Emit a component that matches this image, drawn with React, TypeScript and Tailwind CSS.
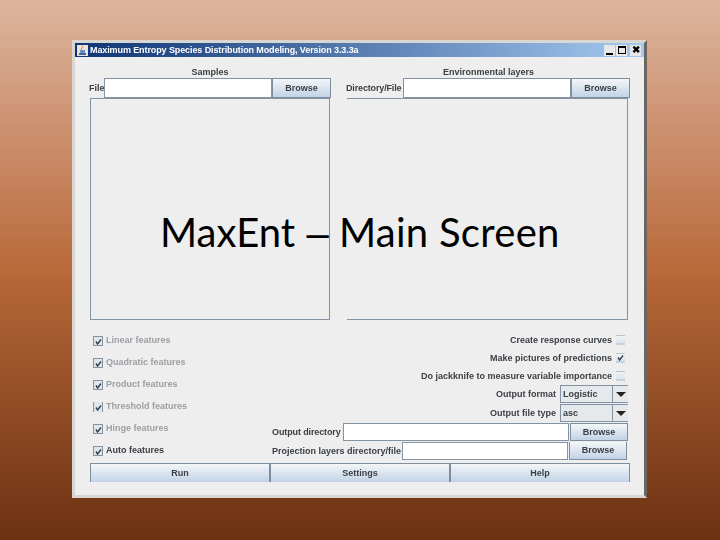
import type { ReactNode } from "react";

const features = ["Linear features", "Quadratic features", "Product features", "Threshold features", "Hinge features", "Auto features"];

function CheckMark() {
  return (
    <svg width="7" height="7" viewBox="0 0 7 7" fill="none" stroke="#33404f" strokeWidth="1.4">
      <path d="M1 3.5 L2.6 6 L6 1.5" />
    </svg>
  );
}

function Btn({ className = "", children }: { className?: string; children: ReactNode }) {
  return (
    <div className={"flex items-center justify-center pt-[1px] border border-[#7f8e9d] bg-gradient-to-b from-[#f4f6f9] to-[#c2d3e5] text-[#3a3f45] text-[9px] font-bold " + className}>
      {children}
    </div>
  );
}

function Field({ className = "" }: { className?: string }) {
  return <div className={"bg-white border border-[#8393a3] " + className} />;
}

function Combo({ value }: { value: string }) {
  return (
    <div className="flex w-[68px] h-[18px] border border-[#8393a3] border-r-0 bg-[#e6e9ec]">
      <div className="flex-1 pl-[2px] pt-[1px] flex items-center text-[9px] font-bold text-[#3a3f45] border-r border-[#8393a3]">{value}</div>
      <div className="w-[15px] flex items-center justify-center">
        <div className="w-0 h-0 border-x-[5px] border-x-transparent border-t-[5px] border-t-[#222]" />
      </div>
    </div>
  );
}

function RightCheck({ label, checked }: { label: string; checked?: boolean }) {
  return (
    <div className="h-[18px] flex items-center justify-end gap-[4px] pr-[5px]">
      <span className="pt-[1px]">{label}</span>
      <div className="w-[9px] h-[10px] border-t border-[#b9c3cd] border-b-2 border-b-[#c3d2e0] bg-gradient-to-b from-[#f0f2f5] to-[#dbe4ec] flex items-center justify-center">
        {checked && <CheckMark />}
      </div>
    </div>
  );
}

export default function App() {
  return (
    <div className="relative w-[720px] h-[540px] overflow-hidden pt-[40px] pl-[72px] bg-gradient-to-b from-[#dcb59e] via-[#b9693a] to-[#6c3213] font-['Liberation_Sans',sans-serif]">
      <div className="w-[575px] h-[458px] bg-[#eeeeee] border-[3px] border-[#d9d7d2] border-r-[#6a6763] flex flex-col text-[9px] font-bold text-[#3a3f45] blur-[0.4px]">
        <div className="h-[14px] shrink-0 flex items-center bg-gradient-to-r from-[#0e3474] to-[#a6caf0] pl-[2px] pr-[3px]">
          <svg width="11" height="11" viewBox="0 0 11 11">
            <rect width="11" height="11" fill="#e9e4da" />
            <path d="M2 8h7v2H2z" fill="#3f68a8" />
            <path d="M3 5h5v3H3z" fill="#6d8fbe" />
            <path d="M5 1c2 2-2 2 0 4" stroke="#d8702a" fill="none" />
          </svg>
          <span className="ml-[2px] pt-[1px] text-white text-[9px] font-bold tracking-[-0.1px]">Maximum Entropy Species Distribution Modeling, Version 3.3.3a</span>
          <div className="ml-auto flex items-center">
            <div className="w-[11px] h-[11px] bg-[#e8e8e8] flex items-end justify-center pb-[1px]"><div className="w-[7px] h-[2px] bg-black" /></div>
            <div className="ml-[1px] w-[11px] h-[11px] bg-[#e8e8e8] flex items-center justify-center"><div className="w-[8px] h-[8px] border border-black border-t-2" /></div>
            <div className="ml-[3px] w-[11px] h-[11px] bg-[#e8e8e8] flex items-center justify-center text-[10px] font-bold leading-none text-black">✖</div>
          </div>
        </div>

        <div className="flex-1 flex flex-col pl-[15px] pr-[14px]">
          <div className="flex gap-[15px]">
            <div className="w-[242px]">
              <div className="h-[21px] pt-[10px] pr-[2px] text-center leading-[11px]">Samples</div>
              <div className="flex h-[20px] items-center">
                <span className="w-[14px] -ml-[1px] mr-[1px] pt-[1px]">File</span>
                <Field className="w-[168px] h-full" />
                <Btn className="w-[59px] h-full">Browse</Btn>
              </div>
              <div className="h-[222px] mr-[2px] border border-[#8393a3]" />
            </div>
            <div className="flex-1">
              <div className="h-[21px] pt-[10px] text-center leading-[11px]">Environmental layers</div>
              <div className="flex h-[20px] items-center">
                <span className="w-[56px] -ml-[1px] mr-[1px] pt-[1px] tracking-[-0.15px]">Directory/File</span>
                <Field className="w-[168px] h-full" />
                <Btn className="w-[59px] h-full">Browse</Btn>
              </div>
              <div className="h-[222px] mr-[2px] border border-[#8393a3] border-l-0" />
            </div>
          </div>

          <div className="mt-[10px] flex">
            <div className="w-[182px]">
              {features.map((f, i) => (
                <div key={f} className="h-[22px] flex items-center gap-[3px] pl-[3px]">
                  <div className={"w-[10px] h-[10px] border border-[#8393a3] bg-[#dfe5eb] flex items-center justify-center " + (i === 3 ? "border-y-0" : "")}><CheckMark /></div>
                  <span className={i === 5 ? "" : "text-[#9b9fa3]"}>{f}</span>
                </div>
              ))}
            </div>
            <div className="flex-1 pt-[1px] flex flex-col">
              <RightCheck label="Create response curves" />
              <RightCheck label="Make pictures of predictions" checked />
              <RightCheck label="Do jackknife to measure variable importance" />
              <div className="h-[19px] flex items-start justify-end gap-[4px] pr-[2px]">
                <span className="leading-[18px]">Output format</span>
                <Combo value="Logistic" />
              </div>
              <div className="h-[19px] flex items-start justify-end gap-[4px] pr-[2px]">
                <span className="leading-[18px]">Output file type</span>
                <Combo value="asc" />
              </div>
              <div className="h-[19px] flex items-start pr-[2px]">
                <span className="mr-[2px] leading-[18px] tracking-[-0.12px]">Output directory</span>
                <Field className="flex-1 h-[18px]" />
                <Btn className="w-[58px] h-[18px] ml-[1px]">Browse</Btn>
              </div>
              <div className="h-[19px] flex items-start pr-[3px]">
                <span className="mr-[1px] leading-[18px]">Projection layers directory/file</span>
                <Field className="flex-1 h-[18px]" />
                <Btn className="w-[58px] h-[18px] ml-[1px] border-t-0">Browse</Btn>
              </div>
            </div>
          </div>

          <div className="mt-[1px] h-[19px] grid grid-cols-3">
            {["Run", "Settings", "Help"].map((b) => (
              <Btn key={b} className="border-b-0">{b}</Btn>
            ))}
          </div>
        </div>
      </div>
      <div className="absolute left-[160px] top-[208px] text-[40px] leading-[48px] text-black font-['Lato',sans-serif]">
        MaxEnt <span className="ml-[1px] font-['Liberation_Sans',sans-serif]">–</span> <span className="tracking-[0.3px]">Main Screen</span>
      </div>
    </div>
  );
}
